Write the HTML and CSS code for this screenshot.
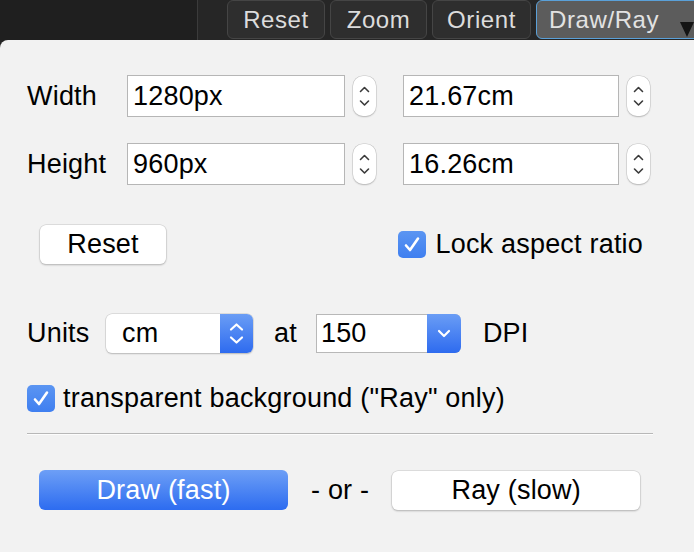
FILE: index.html
```html
<!DOCTYPE html>
<html>
<head>
<meta charset="utf-8">
<link rel="stylesheet" href="styles.css">
</head>
<body>
<div class="topbar">
  <div class="topbar-left"></div>
  <div class="topbar-right">
    <button class="tb-btn tb-reset">Reset</button>
    <button class="tb-btn tb-zoom">Zoom</button>
    <button class="tb-btn tb-orient">Orient</button>
    <button class="tb-btn tb-active">Draw/Ray<svg class="tb-arrow" viewBox="0 0 14 15" width="14" height="15"><path d="M0 0 L14 0 L7 15 Z" /></svg></button>
  </div>
</div>
<div class="panel">
  <div class="row row-size">
    <span class="label">Width</span>
    <div class="field field-px">1280px</div>
    <div class="stepper"><svg viewBox="0 0 23 40" width="23" height="40"><path d="M7.5 15.5 L11.5 11.5 L15.5 15.5" /><path d="M7.5 25 L11.5 29 L15.5 25" /></svg></div>
    <div class="field field-cm">21.67cm</div>
    <div class="stepper"><svg viewBox="0 0 23 40" width="23" height="40"><path d="M7.5 15.5 L11.5 11.5 L15.5 15.5" /><path d="M7.5 25 L11.5 29 L15.5 25" /></svg></div>
  </div>
  <div class="row row-size row-height">
    <span class="label">Height</span>
    <div class="field field-px">960px</div>
    <div class="stepper"><svg viewBox="0 0 23 40" width="23" height="40"><path d="M7.5 15.5 L11.5 11.5 L15.5 15.5" /><path d="M7.5 25 L11.5 29 L15.5 25" /></svg></div>
    <div class="field field-cm">16.26cm</div>
    <div class="stepper"><svg viewBox="0 0 23 40" width="23" height="40"><path d="M7.5 15.5 L11.5 11.5 L15.5 15.5" /><path d="M7.5 25 L11.5 29 L15.5 25" /></svg></div>
  </div>
  <div class="row row-reset">
    <button class="btn btn-reset">Reset</button>
    <label class="check check-lock"><span class="box"><svg viewBox="0 0 28 27" width="28" height="27"><path d="M8 14.5 L12 19 L20 7.5" /></svg></span>Lock aspect ratio</label>
  </div>
  <div class="row row-units">
    <span class="label label-units">Units</span>
    <div class="select select-units"><span class="select-text">cm</span><span class="select-btn"><svg viewBox="0 0 33 39" width="33" height="39"><path d="M11 15.5 L16.5 10.5 L22 15.5" /><path d="M11 23.5 L16.5 28.5 L22 23.5" /></svg></span></div>
    <span class="label-at">at</span>
    <div class="select combo"><span class="select-text">150</span><span class="select-btn"><svg viewBox="0 0 34 39" width="34" height="39"><path d="M12 17 L17 22 L22 17" /></svg></span></div>
    <span class="label-dpi">DPI</span>
  </div>
  <div class="row row-transp">
    <label class="check"><span class="box"><svg viewBox="0 0 28 27" width="28" height="27"><path d="M8 14.5 L12 19 L20 7.5" /></svg></span>transparent background ("Ray" only)</label>
  </div>
  <div class="separator"></div>
  <div class="row row-actions">
    <button class="btn btn-primary">Draw (fast)</button>
    <span class="or">- or -</span>
    <button class="btn btn-ray">Ray (slow)</button>
  </div>
</div>
</body>
</html>
```

FILE: styles.css
```css
* { box-sizing: border-box; }
html, body {
  margin: 0;
  padding: 0;
  width: 694px;
  height: 552px;
  overflow: hidden;
  background: #242424;
  font-family: "Liberation Sans", Arial, sans-serif;
}
button { font-family: inherit; letter-spacing: inherit; }

.topbar {
  display: flex;
  height: 40px;
}
.topbar-left {
  width: 198px;
  background: #1f1f1f;
  border-right: 1px solid #3b3b3b;
}
.topbar-right {
  flex: 1;
  display: flex;
  align-items: flex-start;
  background: #262626;
  padding-left: 29px;
  gap: 5px;
}
.tb-btn {
  height: 39px;
  margin-top: 0;
  border: 1px solid #454545;
  border-radius: 6px;
  background: #2e2e2e;
  color: #dcdcdc;
  font-size: 24px;
  letter-spacing: 0.6px;
  padding: 0;
  line-height: 37px;
}
.tb-reset { width: 98px; }
.tb-zoom { width: 97px; }
.tb-orient { width: 99px; margin-left: 0; }
.tb-active {
  flex: 1;
  margin-right: -10px;
  background: #5c5c5c;
  border: 1.5px solid #5aa0d8;
  color: #e2e2e2;
  text-align: left;
  padding-left: 12px;
  position: relative;
}
.tb-arrow {
  position: absolute;
  right: 9px;
  top: 21px;
  display: block;
}
.tb-arrow path { fill: #141414; }

.panel {
  height: 512px;
  background: #f2f2f2;
  border-top-left-radius: 8px;
  padding: 35px 27px 0 27px;
  color: #000;
  font-size: 27px;
  letter-spacing: 0.2px;
}

.row {
  display: flex;
  align-items: center;
}
.label {
  width: 100px;
  font-size: 27px;
}
.field {
  height: 42px;
  background: #fff;
  border: 1px solid #b6b6b6;
  font-size: 27px;
  line-height: 40px;
  padding-left: 5px;
}
.field-px { width: 218px; }
.field-cm { width: 216px; margin-left: 27px; }
.stepper {
  width: 23px;
  height: 40px;
  margin-left: 8px;
  background: #fff;
  border-radius: 10px;
  box-shadow: 0 0 0 0.5px #c4c4c4, 0 1px 1.5px rgba(0,0,0,0.25);
}
.stepper svg { display: block; }
.stepper path {
  fill: none;
  stroke: #3a3a3a;
  stroke-width: 1.6;
  stroke-linecap: round;
  stroke-linejoin: round;
}
.row-height { margin-top: 26px; }

.row-reset {
  margin-top: 40px;
  justify-content: space-between;
  padding-right: 24px;
}
.btn {
  height: 39px;
  border: none;
  border-radius: 6px;
  font-size: 27px;
  padding: 0;
  color: #000;
}
.btn-reset {
  width: 126px;
  margin-left: 13px;
  background: #fff;
  box-shadow: 0 0 0 0.5px #c8c8c8, 0 1px 2px rgba(0,0,0,0.3);
}

.check {
  display: flex;
  align-items: center;
  font-size: 27px;
}
.box {
  width: 28px;
  height: 27px;
  border-radius: 5px;
  background: linear-gradient(#5b95f2, #3f7ff0);
  margin-right: 9px;
}
.box svg { display: block; }
.box path {
  fill: none;
  stroke: #fff;
  stroke-width: 2.6;
  stroke-linecap: round;
  stroke-linejoin: round;
}

.row-units { margin-top: 50px; }
.label-units { width: 79px; }
.select {
  height: 39px;
  display: flex;
  background: #fff;
  border-radius: 6px;
  box-shadow: 0 0 0 0.5px #c6c6c6, 0 1px 1.5px rgba(0,0,0,0.25);
}
.select-units { width: 147px; }
.select-text {
  flex: 1;
  font-size: 27px;
  line-height: 39px;
  padding-left: 16px;
}
.select-btn {
  width: 33px;
  border-radius: 0 6px 6px 0;
  background: linear-gradient(#6a9df5, #2e6bef);
}
.select-btn svg { display: block; }
.select-btn path {
  fill: none;
  stroke: #fff;
  stroke-width: 2.2;
  stroke-linecap: round;
  stroke-linejoin: round;
}
.label-at { margin-left: 21px; margin-right: 19px; }
.combo {
  width: 145px;
  border-radius: 0 6px 6px 0;
  box-shadow: none;
  border: 1px solid #b8b8b8;
  border-right: none;
}
.combo .select-text { padding-left: 4px; line-height: 37px; }
.combo .select-btn { width: 34px; margin: -1px 0; }
.label-dpi { margin-left: 22px; }

.row-transp { margin-top: 30px; }
.row-transp .box { margin-right: 8px; }

.separator {
  margin-top: 19px;
  width: 626px;
  height: 2px;
  border-top: 1px solid #b8b8b8;
  border-bottom: 1px solid #fdfdfd;
}

.row-actions {
  margin-top: 35px;
  padding-left: 12px;
}
.btn-primary {
  width: 249px;
  height: 40px;
  color: #fff;
  background: linear-gradient(#6d9ff6, #2d6cf0);
}
.or { margin-left: 23px; margin-right: 23px; }
.btn-ray {
  width: 248px;
  background: #fff;
  box-shadow: 0 0 0 0.5px #c8c8c8, 0 1px 2px rgba(0,0,0,0.3);
}
```
